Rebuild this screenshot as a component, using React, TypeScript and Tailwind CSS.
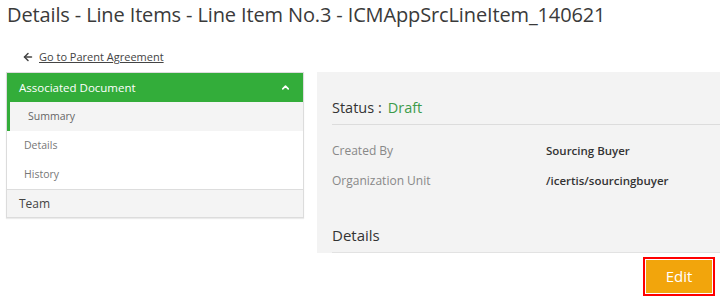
import { ArrowLeft, ChevronUp } from 'lucide-react';

const font = { fontFamily: '"Open Sans", "Noto Sans", sans-serif' };

const navItems = ['Summary', 'Details', 'History'];

const fields = [
  { label: 'Created By', value: 'Sourcing Buyer' },
  { label: 'Organization Unit', value: '/icertis/sourcingbuyer' },
];

export default function App() {
  return (
    <div className="w-[720px] h-[304px] bg-white overflow-hidden relative font-['Open_Sans',sans-serif]">
      <h1 className="pl-[7px] pt-[2px] text-[20px] leading-[26px] text-[#3a3a3a] tracking-[-0.13px]">
        Details - Line Items - Line Item No.3 - ICMAppSrcLineItem_140621
      </h1>

      <div className="flex items-center gap-[5px] pl-[22px] mt-[21px] h-[16px]">
        <ArrowLeft size={12} strokeWidth={3} className="text-[#444]" />
        <a className="text-[11px] text-[#444] underline">Go to Parent Agreement</a>
      </div>

      <div className="flex items-start mt-[7px]">
        <div className="ml-[6px] w-[298px] border border-[#dcdcdc] shadow-[0_1px_1px_rgba(0,0,0,0.08)]">
          <div className="h-[29px] bg-[#33ad3a] flex items-center justify-between pl-[12px] pr-[12px]">
            <span className="text-[11.5px] text-white">Associated Document</span>
            <ChevronUp size={11} strokeWidth={3.5} className="text-white" />
          </div>
          {navItems.map((item, i) => (
            <div
              key={item}
              className={
                i === 0
                  ? 'h-[29px] flex items-center bg-[#f4f4f4] border-l-[3px] border-[#33ad3a] pl-[18px] text-[10.5px] text-[#666]'
                  : 'h-[29px] flex items-center bg-white pl-[17px] text-[10.5px] text-[#777]'
              }
            >
              {item}
            </div>
          ))}
          <div className="h-[28px] flex items-center bg-[#f4f4f4] border-t border-[#dddddd] pl-[12px] text-[12px] text-[#444]">
            Team
          </div>
        </div>

        <div className="ml-[13px] flex-1 h-[181px] bg-[#f3f3f3] pl-[15px] pt-[23px] flex flex-col" style={font}>
          <div className="flex items-center gap-[6px] h-[26px] text-[14.5px]">
            <span className="text-[#333]">Status :</span>
            <span className="text-[#3d9b4b]">Draft</span>
          </div>
          <div className="mt-[3px] border-t border-[#dcdcdc]" />
          <div className="mt-[17px] flex flex-col gap-[12px]">
            {fields.map((f) => (
              <div key={f.label} className="flex items-center h-[18px] text-[12px]">
                <span className="w-[214px] text-[#888]">{f.label}</span>
                <span className="text-[#333] text-[11.5px] font-semibold">{f.value}</span>
              </div>
            ))}
          </div>
          <div className="mt-[34px] text-[15px] text-[#333] h-[22px] flex items-center">Details</div>
          <div className="mt-auto border-t border-[#e2e2e2]" />
        </div>
      </div>

      <div className="flex justify-end pr-[5px] mt-[4px]">
        <div className="border-2 border-[#ff0000] p-[1px]">
          <button className="w-[66px] h-[33px] bg-[#f2a50c] text-white text-[15px]">Edit</button>
        </div>
      </div>
    </div>
  );
}
